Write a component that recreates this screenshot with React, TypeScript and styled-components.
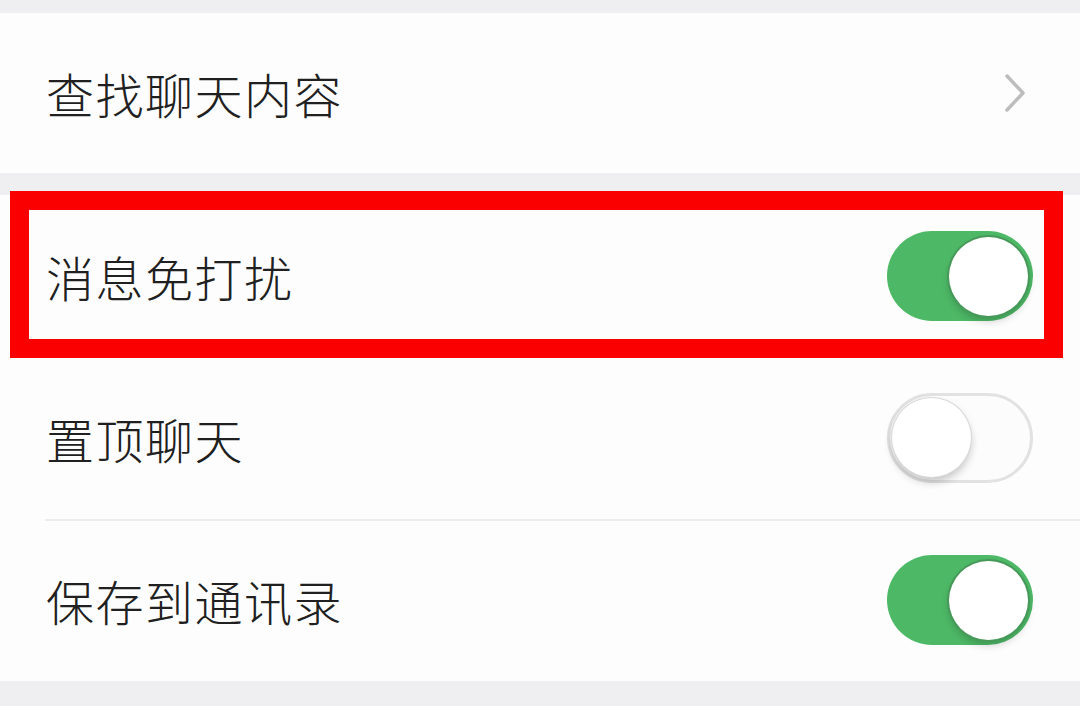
import React from "react";
import styled, { createGlobalStyle } from "styled-components";

const Global = createGlobalStyle`
  html, body { margin: 0; padding: 0; background: #efeff1; }
  body { font-family: "Noto Sans CJK SC", "Noto Sans", sans-serif; }
`;

const Page = styled.div`
  width: 1080px;
  height: 706px;
  overflow: hidden;
  background: #efeff1;
  padding-top: 13px;
  box-sizing: border-box;
  display: flex;
  flex-direction: column;
  gap: 22px;
`;

const Group = styled.div`
  background: #fdfdfd;
  display: flex;
  flex-direction: column;
`;

const Row = styled.div<{ $h: number; $sep?: boolean }>`
  position: relative;
  height: ${(p) => p.$h}px;
  display: flex;
  align-items: center;
  justify-content: space-between;
  padding: 0 47px 0 46px;
  box-sizing: border-box;
  ${(p) =>
    p.$sep
      ? `&::before { content: ""; position: absolute; top: 0; left: 45px; right: 0; height: 2px; background: #ececec; }`
      : ""}
`;

const Label = styled.span`
  font-size: 48px;
  font-weight: 300;
  color: #202020;
  letter-spacing: 1.5px;
  line-height: 1;
  position: relative;
  z-index: 1;
`;

const Highlight = styled.div`
  position: absolute;
  left: 10px;
  right: 17px;
  top: -4px;
  bottom: -1px;
  border: 19px solid #fb0000;
  pointer-events: none;
`;

const Track = styled.div<{ $on: boolean }>`
  width: 146px;
  height: 90px;
  border-radius: 45px;
  box-sizing: border-box;
  position: relative;
  z-index: 1;
  background: ${(p) => (p.$on ? "#4db966" : "#fcfcfc")};
  border: ${(p) => (p.$on ? "none" : "3px solid #e2e2e2")};
`;

const Knob = styled.div<{ $on: boolean }>`
  position: absolute;
  width: 79px;
  height: 79px;
  border-radius: 50%;
  background: #ffffff;
  top: ${(p) => (p.$on ? "6px" : "2px")};
  ${(p) => (p.$on ? "right: 5px;" : "left: 2px;")}
  box-shadow: ${(p) =>
    p.$on
      ? "0 0 0 2px #47995a, 0 5px 8px rgba(0,0,0,0.2)"
      : "0 0 0 1px #d8d8d8, 0 5px 8px rgba(0,0,0,0.22)"};
`;

const Toggle = ({ on }: { on: boolean }) => (
  <Track $on={on}>
    <Knob $on={on} />
  </Track>
);

const Chevron = () => (
  <svg width="24" height="40" viewBox="0 0 24 40" style={{ marginRight: 6 }}>
    <path d="M4 3 L20 20 L4 37" fill="none" stroke="#bdbdbd" strokeWidth="3.5" strokeLinecap="round" strokeLinejoin="round" />
  </svg>
);

export default function App() {
  return (
    <>
      <Global />
      <Page>
        <Group>
          <Row $h={160}>
            <Label>查找聊天内容</Label>
            <Chevron />
          </Row>
        </Group>
        <Group>
          <Row $h={162}>
            <Highlight />
            <Label>消息免打扰</Label>
            <Toggle on />
          </Row>
          <Row $h={162}>
            <Label>置顶聊天</Label>
            <Toggle on={false} />
          </Row>
          <Row $h={162} $sep>
            <Label>保存到通讯录</Label>
            <Toggle on />
          </Row>
        </Group>
      </Page>
    </>
  );
}
